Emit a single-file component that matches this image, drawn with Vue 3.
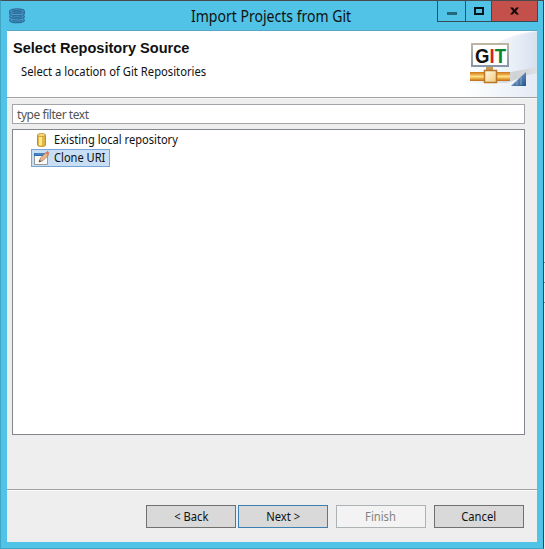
<script setup>
import { ref } from 'vue'

const filter = ref('')
const selected = ref('clone')
const sources = [
  { id: 'local', label: 'Existing local repository' },
  { id: 'clone', label: 'Clone URI' },
]
const actions = [
  { id: 'back', label: '< Back' },
  { id: 'next', label: 'Next >' },
  { id: 'finish', label: 'Finish', disabled: true },
  { id: 'cancel', label: 'Cancel' },
]
</script>

<template>
  <div class="screen">
    <div class="window">
      <header class="titlebar">
        <svg class="app-icon" width="18" height="16" viewBox="0 0 18 16">
          <path d="M1.500 3v9.500c0 3 15 3 15 0V3c0-3-15-3-15 0z" fill="#4b9fca" />
          <g fill="none" stroke="#2f6f9e" stroke-width="1.200">
            <ellipse cx="9" cy="3.200" rx="7.400" ry="2.300" />
            <ellipse cx="9" cy="3.400" rx="4.500" ry=".8" />
            <path d="M1.600 3.500v2c0 2.800 14.800 2.800 14.800 0v-2" />
            <path d="M3 7.500c-3 1.200-1 3.300 6 3.300s9-2.100 6-3.300" />
            <path d="M4 8.500c3 1 7 1 10 0" />
            <path d="M3 11c-3 1.200-1 3.700 6 3.700s9-2.500 6-3.700" />
            <path d="M4 12.300c3 1 7 1 10 0" />
          </g>
        </svg>
        <h1 class="caption"><span class="caption-text">Import Projects from Git</span></h1>
        <div class="controls">
          <button class="control minimize"><i class="bar"></i></button>
          <button class="control maximize"><i class="box"></i></button>
          <button class="control close">
            <svg width="9" height="8" viewBox="0 0 10 8">
              <path d="M0 0h3l2 2.300L7 0h3L6.700 4 10 8H7L5 5.700 3 8H0l3.300-4z" fill="#140a0a" />
            </svg>
          </button>
        </div>
      </header>

      <main class="client">
        <section class="banner">
          <div class="banner-copy">
            <h2 class="heading"><span class="heading-text">Select Repository Source</span></h2>
            <p class="description"><span class="description-text">Select a location of Git Repositories</span></p>
          </div>
          <svg class="banner-art" width="76" height="66" viewBox="0 0 76 66">
            <defs>
              <linearGradient id="sky" x1="0" y1="0" x2="1" y2="0">
                <stop offset="0" stop-color="#fff" />
                <stop offset="1" stop-color="#d5e0f0" />
              </linearGradient>
              <linearGradient id="swoop" x1="0" y1="0" x2="1" y2="0">
                <stop offset="0" stop-color="#eef3fa" stop-opacity=".3" />
                <stop offset="1" stop-color="#d5e0ee" />
              </linearGradient>
              <linearGradient id="shade" x1="0" y1="0" x2="1" y2="0">
                <stop offset="0" stop-color="#ddd" stop-opacity="0" />
                <stop offset=".7" stop-color="#cfd2d5" />
                <stop offset="1" stop-color="#dcdfe3" />
              </linearGradient>
              <linearGradient id="pipe" x1="0" y1="0" x2="0" y2="1">
                <stop offset="0" stop-color="#c9781c" />
                <stop offset=".25" stop-color="#e9a33b" />
                <stop offset=".5" stop-color="#ffe18a" />
                <stop offset=".75" stop-color="#e9a238" />
                <stop offset="1" stop-color="#b8691b" />
              </linearGradient>
              <linearGradient id="node" x1="0" y1="0" x2="1" y2="1">
                <stop offset="0" stop-color="#fffbe9" />
                <stop offset="1" stop-color="#f2c779" />
              </linearGradient>
              <linearGradient id="wedge" x1="0" y1="0" x2="1" y2="1">
                <stop offset=".2" stop-color="#7ea0c7" />
                <stop offset="1" stop-color="#24558e" />
              </linearGradient>
              <linearGradient id="frame" x1="0" y1="0" x2="0" y2="1">
                <stop offset="0" stop-color="#bdb5a2" />
                <stop offset="1" stop-color="#8796ab" />
              </linearGradient>
            </defs>
            <path d="M3 66C1 35 28 5 76 0V66z" fill="url(#sky)" opacity=".65" />
            <path d="M45 12Q58 3 76 1V42Q55 48 42 48z" fill="url(#swoop)" />
            <path d="M2 52L20 43 50 41 76 36V42C65 43 54 50 45 52z" fill="url(#shade)" />
            <rect x="11" y="13" width="36" height="22" fill="#fff" stroke="url(#frame)" stroke-width="2" />
            <text class="logo" x="14" y="31.500" textLength="31" lengthAdjust="spacingAndGlyphs"><tspan fill="#111">G</tspan><tspan fill="#d5202b">I</tspan><tspan fill="#07852b">T</tspan></text>
            <rect x="25" y="36" width="7" height="4" fill="#c99952" />
            <rect x="9" y="41" width="14" height="9" fill="url(#pipe)" />
            <rect x="35" y="41" width="14" height="9" fill="url(#pipe)" />
            <path d="M23.500 39.500h12v12h-12z" fill="url(#node)" stroke="#b87828" stroke-width="1.500" />
            <path d="M50 55L65 41V55z" fill="url(#wedge)" />
            <path d="M60 46v8M56 50v4" stroke="#b9cadf" stroke-width=".6" />
          </svg>
        </section>

        <section class="body">
          <input v-model="filter" class="filter" type="text" placeholder="type filter text" />
          <ul class="tree">
            <li
              v-for="source in sources"
              :key="source.id"
              class="item"
              :class="{ selected: source.id === selected }"
              @click="selected = source.id"
            >
              <svg v-if="source.id === 'local'" class="item-icon" width="16" height="16" viewBox="0 0 16 16">
                <path d="M3.500 3v10c0 1.900 8 1.900 8 0V3z" fill="#e5b340" stroke="#c08d2c" />
                <path d="M5 4.500h3v9c-1 0-2.500-.1-3-.5z" fill="#ffeb91" />
                <ellipse cx="7.500" cy="3" rx="4" ry="1.500" fill="#f8df83" stroke="#c99a38" />
              </svg>
              <svg v-else class="item-icon" width="16" height="16" viewBox="0 0 16 16">
                <path d="M.5 3.500h13v11H.500z" fill="#f7fbff" stroke="#9c9b8c" />
                <path d="M0 3h14v3H0z" fill="#2f6fae" />
                <path d="M1 4h12" stroke="#5c9bd3" />
                <path d="M5 12L6.500 8 12 2.500 14.500 5 9 10.500z" fill="#eab98d" stroke="#a9714b" stroke-width=".8" />
                <path d="M11.500 3L13.500 .8 15.500 3 14 5z" fill="#d18068" />
                <path d="M5 12l.7-2 1.400 1.200z" fill="#333" />
              </svg>
              <span class="item-text">{{ source.label }}</span>
            </li>
          </ul>
        </section>

        <footer class="actions">
          <button v-for="action in actions" :key="action.id" class="action" :class="action.id" :disabled="action.disabled">
            <span class="action-text">{{ action.label }}</span>
          </button>
        </footer>
      </main>
    </div>
    <div class="behind"><i class="mark"></i><i class="mark"></i><i class="mark"></i></div>
  </div>
</template>

<style>
body {
  overflow: hidden;
}
</style>

<style scoped>
.screen,
.screen * {
  box-sizing: border-box;
}
.screen {
  display: flex;
  width: 545px;
  height: 549px;
  background: #e8e8e8;
  font-family: "Noto Sans", "Open Sans", sans-serif;
  font-size: 12px;
  color: #111;
}
.window {
  display: flex;
  flex-direction: column;
  width: 544px;
  height: 549px;
  padding: 0 6px 6px;
  border: 1px solid #3fa6c5;
  border-top-color: #4b4b4f;
  border-right-color: #3d4650;
  background: #50c3e6;
}
.titlebar {
  display: flex;
  flex: none;
  height: 30px;
  border-bottom: 1px solid #5aa6c6;
}
.app-icon {
  flex: none;
  margin: 7px 0 0 1px;
}
.caption {
  flex: 1;
  margin: 0;
  padding: 3px 0 0 165px;
  font-size: 15.500px;
  font-weight: 400;
  line-height: 24px;
  white-space: nowrap;
}
.caption-text,
.heading-text,
.description-text,
.item-text,
.action-text {
  display: inline-block;
  white-space: nowrap;
  transform-origin: left center;
}
.caption-text {
  transform: scaleX(0.905);
}
.controls {
  display: flex;
  flex: none;
  height: 21px;
  margin-right: -1px;
  border: 1px solid #354b57;
  border-top: 0;
}
.control {
  display: flex;
  align-items: center;
  justify-content: center;
  padding: 0;
  border: 0;
  background: #50c3e6;
}
.minimize {
  width: 27px;
}
.maximize {
  width: 27px;
  border-right: 1px solid #354b57;
  border-left: 1px solid #354b57;
}
.close {
  width: 45px;
  background: #c4504b;
}
.bar {
  width: 10px;
  height: 3px;
  margin-top: 5px;
  background: #24687e;
}
.box {
  width: 10px;
  height: 8px;
  border: 2px solid #07141a;
}
.client {
  display: flex;
  flex-direction: column;
  width: 530px;
  height: 511px;
  background: #eee;
}
.banner {
  display: flex;
  flex: none;
  justify-content: space-between;
  height: 67px;
  border-bottom: 1px solid #a0a0a0;
  background: #fff;
}
.banner-copy {
  padding: 7px 0 0 6px;
}
.heading {
  margin: 0;
  font-family: "Liberation Sans", Arial, sans-serif;
  font-size: 14px;
  font-weight: 700;
  line-height: 20px;
}
.heading-text {
  transform: scaleX(1.04);
}
.description {
  margin: 5px 0 0 8px;
  line-height: 18px;
}
.description-text,
.action-text {
  transform: scaleX(0.935);
}
.banner-art {
  flex: none;
}
.logo {
  font-family: "Liberation Sans", Arial, sans-serif;
  font-size: 20px;
  font-weight: 700;
}
.body {
  display: flex;
  flex: 1;
  flex-direction: column;
  gap: 5px;
  padding: 5px 12px 54px 5px;
  border-top: 1px solid #f8f8f8;
}
.filter {
  flex: none;
  width: 100%;
  height: 20px;
  padding: 0 4px;
  border: 1px solid #a3a5ab;
  outline: 0;
  background: #fff;
  font: 12px "Noto Sans", "Open Sans", sans-serif;
  letter-spacing: -0.450px;
}
.filter::placeholder {
  color: #555;
  opacity: 1;
}
.tree {
  display: flex;
  flex: 1;
  flex-direction: column;
  align-items: flex-start;
  margin: 0;
  padding: 1px 0 0 18px;
  border: 1px solid #82868d;
  background: #fff;
  list-style: none;
}
.item {
  display: flex;
  align-items: center;
  height: 18px;
  padding: 0 2px;
  border: 1px solid transparent;
}
.item.selected {
  width: 79px;
  border-color: #78a4d5;
  background: #c8def5;
}
.item-icon {
  flex: none;
  margin-right: 4px;
}
.item-text {
  line-height: 16px;
  transform: scaleX(0.925);
}
.actions {
  display: flex;
  flex: none;
  justify-content: flex-end;
  height: 53px;
  padding: 15px 13px 0 0;
  border-top: 1px solid #a0a0a0;
  box-shadow: inset 0 1px #fafafa;
}
.action {
  display: flex;
  align-items: center;
  justify-content: center;
  width: 90px;
  height: 23px;
  padding: 0;
  border: 1px solid #707070;
  background: #d9d9d9;
  color: #111;
  font: inherit;
}
.action-text {
  transform-origin: center;
}
.next {
  margin-left: 2px;
  border-color: #3c7fb1;
}
.finish,
.cancel {
  margin-left: 8px;
}
.finish {
  border-color: #adb2b5;
  background: #f3f3f3;
  color: #838383;
}
.behind {
  display: flex;
  flex-direction: column;
  gap: 19px;
  width: 1px;
  padding-top: 262px;
}
.mark {
  width: 1px;
  height: 1px;
  background: #888;
}
</style>
